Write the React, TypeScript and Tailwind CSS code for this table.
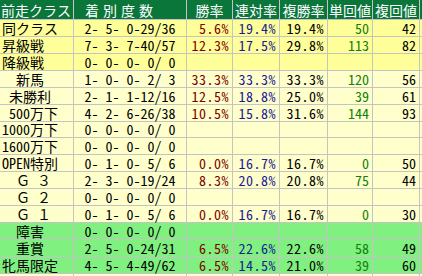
type Row = {
  name: string
  record: string
  win?: string
  place?: string
  show?: string
  winRet?: string
  showRet?: string
  tone: 'yellow' | 'cream' | 'green'
}

const rows: Row[] = [
  { name: '同クラス', record: '2- 5- 0-29/36', win: '5.6%', place: '19.4%', show: '19.4%', winRet: '50', showRet: '42', tone: 'yellow' },
  { name: '昇級戦', record: '7- 3- 7-40/57', win: '12.3%', place: '17.5%', show: '29.8%', winRet: '113', showRet: '82', tone: 'yellow' },
  { name: '降級戦', record: '0- 0- 0- 0/ 0', tone: 'yellow' },
  { name: '　新馬', record: '1- 0- 0- 2/ 3', win: '33.3%', place: '33.3%', show: '33.3%', winRet: '120', showRet: '56', tone: 'cream' },
  { name: ' 未勝利', record: '2- 1- 1-12/16', win: '12.5%', place: '18.8%', show: '25.0%', winRet: '39', showRet: '61', tone: 'cream' },
  { name: ' 500万下', record: '4- 2- 6-26/38', win: '10.5%', place: '15.8%', show: '31.6%', winRet: '144', showRet: '93', tone: 'cream' },
  { name: '1000万下', record: '0- 0- 0- 0/ 0', tone: 'cream' },
  { name: '1600万下', record: '0- 0- 0- 0/ 0', tone: 'cream' },
  { name: 'OPEN特別', record: '0- 1- 0- 5/ 6', win: '0.0%', place: '16.7%', show: '16.7%', winRet: '0', showRet: '50', tone: 'cream' },
  { name: '　Ｇ ３', record: '2- 3- 0-19/24', win: '8.3%', place: '20.8%', show: '20.8%', winRet: '75', showRet: '44', tone: 'cream' },
  { name: '　Ｇ ２', record: '0- 0- 0- 0/ 0', tone: 'cream' },
  { name: '　Ｇ １', record: '0- 1- 0- 5/ 6', win: '0.0%', place: '16.7%', show: '16.7%', winRet: '0', showRet: '30', tone: 'cream' },
  { name: '　障害', record: '0- 0- 0- 0/ 0', tone: 'green' },
  { name: '　重賞', record: '2- 5- 0-24/31', win: '6.5%', place: '22.6%', show: '22.6%', winRet: '58', showRet: '49', tone: 'green' },
  { name: '牝馬限定', record: '4- 5- 4-49/62', win: '6.5%', place: '14.5%', show: '21.0%', winRet: '39', showRet: '60', tone: 'green' },
]

const toneBg = {
  yellow: 'bg-[#ffff99]',
  cream: 'bg-[#ffffcc]',
  green: 'bg-[#80f080]',
}

const headers = ['勝率', '連対率', '複勝率', '単回値', '複回値']

export default function App() {
  return (
    <div className="w-[422px] h-[276px] overflow-hidden bg-white">
      <div className="grid h-[276px] grid-cols-[73px_112px_45px_46px_47px_44px_46px_1fr] grid-rows-[19px_repeat(15,15.93px)_1fr] gap-px bg-[#c4c4c4] font-['Noto_Sans_Mono_CJK_JP','Noto_Sans_CJK_JP',monospace] text-[14px] leading-none text-black">
        {/* ヘッダー */}
        <div className="flex items-center whitespace-pre bg-[#0a763a] pl-px text-white">前走クラス</div>
        <div className="flex items-center whitespace-pre bg-[#0a763a] pl-[11px] tracking-[4px] text-white">着別度数</div>
        {headers.map(h => (
          <div key={h} className="flex items-center justify-center bg-[#0a763a] text-white">{h}</div>
        ))}
        <div className="bg-[#0a763a]" />

        {/* データ行 */}
        {rows.map(r => {
          const bg = toneBg[r.tone]
          return (
            <div key={r.name} className="contents">
              <div className={`flex items-center whitespace-pre pl-[2px] ${bg}`}>{r.name}</div>
              <div className={`flex items-center justify-center whitespace-pre ${bg}`}>{r.record}</div>
              <div className={`flex items-center justify-end pr-[3px] tracking-[0.5px] text-[#800000] ${bg}`}>{r.win}</div>
              <div className={`flex items-center justify-end pr-[3px] tracking-[0.5px] text-[#1a1a96] ${bg}`}>{r.place}</div>
              <div className={`flex items-center justify-end pr-[3px] tracking-[0.5px] ${bg}`}>{r.show}</div>
              <div className={`flex items-center justify-end pr-[3px] text-[#108010] ${bg}`}>{r.winRet}</div>
              <div className={`flex items-center justify-end pr-[3px] ${bg}`}>{r.showRet}</div>
              <div className={bg} />
            </div>
          )
        })}

        {/* 下端で切れている行 */}
        {Array.from({ length: 8 }).map((_, i) => (
          <div key={i} className="bg-[#ffffcc]" />
        ))}
      </div>
    </div>
  )
}
